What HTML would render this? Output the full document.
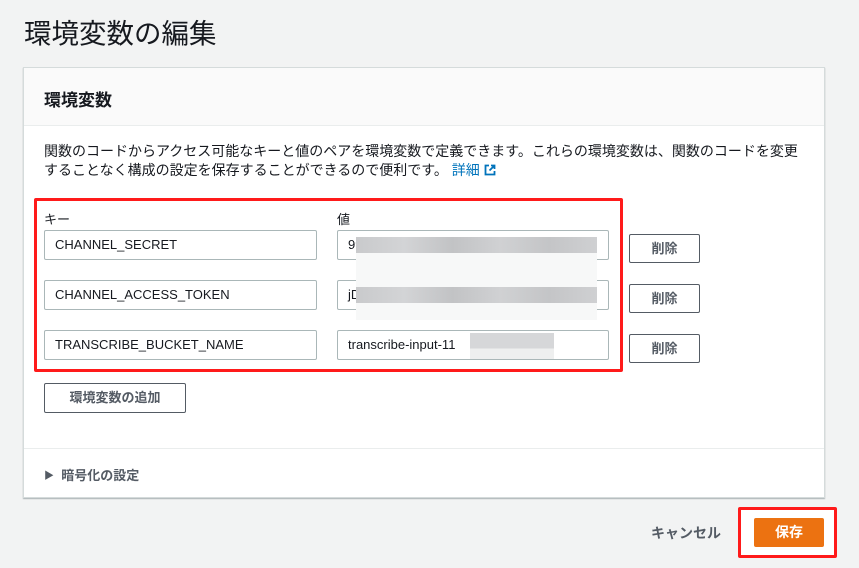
<!DOCTYPE html>
<html><head><meta charset="utf-8"><style>
*{box-sizing:border-box;margin:0;padding:0}
body{width:859px;height:568px;background:#f2f3f3;font-family:"Liberation Sans","Noto Sans CJK JP",sans-serif;color:#16191f;position:relative;overflow:hidden}
.a{position:absolute}
h1{position:absolute;left:24px;top:11px;font-size:27.5px;font-weight:400;color:#16191f}
.panel{left:23px;top:67px;width:802px;height:431px;background:#fff;border:1px solid #d5dbdb;box-shadow:0 1px 1px rgba(0,28,36,.3)}
.hd{left:0;top:0;width:800px;height:58px;background:#fafafa;border-bottom:1px solid #eaeded}
.inp{height:30px;border:1px solid #aab7b8;border-radius:2px;background:#fff;font-size:13px;padding:0 10px;line-height:28px}
.btn{border:1px solid #545b64;border-radius:2px;background:#fff;font-size:13px;font-weight:bold;color:#545b64;text-align:center}
.blur{background:linear-gradient(90deg,#c9cacc,#d3d4d6 20%,#c2c3c5 40%,#d0d1d3 60%,#c4c5c7 80%,#cfd0d2)}
</style></head><body>
<h1>環境変数の編集</h1>
<div class="a panel">
<div class="a hd"><div class="a" style="left:20px;top:18px;font-size:17px;font-weight:bold">環境変数</div></div>
<div class="a" style="left:20px;top:74px;width:780px;font-size:14px;line-height:19px;color:#16191f;white-space:nowrap">関数のコードからアクセス可能なキーと値のペアを環境変数で定義できます。これらの環境変数は、関数のコードを変更<br>することなく構成の設定を保存することができるので便利です。 <span style="color:#0073bb">詳細 <svg width="12" height="12" viewBox="0 0 12 12" style="vertical-align:-1px"><path d="M5 1.5H1.5v9h9V7M7 1.5h3.5V5M10.5 1.5 5.5 6.5" fill="none" stroke="#0073bb" stroke-width="1.8"/></svg></span></div>
<div class="a" style="left:20px;top:141px;font-size:13px">キー</div>
<div class="a" style="left:313px;top:141px;font-size:13px">値</div>
<div class="a" style="left:0;top:380px;width:800px;border-top:1px solid #eaeded"></div>
<div class="a" style="left:20px;top:397px;font-size:13px;font-weight:bold;color:#545b64"><span style="font-size:10px;vertical-align:1px">▶</span>&nbsp;&nbsp;暗号化の設定</div>
</div>
<div class="a inp" style="left:44px;top:230px;width:273px">CHANNEL_SECRET</div>
<div class="a inp" style="left:44px;top:280px;width:273px">CHANNEL_ACCESS_TOKEN</div>
<div class="a inp" style="left:44px;top:330px;width:273px">TRANSCRIBE_BUCKET_NAME</div>
<div class="a inp" style="left:337px;top:230px;width:272px">99</div>
<div class="a inp" style="left:337px;top:280px;width:272px">jD</div>
<div class="a inp" style="left:337px;top:330px;width:272px">transcribe-input-11</div>
<div class="a" style="left:356px;top:253px;width:241px;height:67px;background:#f7f8f8"></div>
<div class="a blur" style="left:356px;top:237px;width:241px;height:16px"></div>
<div class="a blur" style="left:356px;top:287px;width:241px;height:16px"></div>
<div class="a" style="left:470px;top:333px;width:84px;height:26px;background:linear-gradient(#d6d7d9 60%,#eeefef 60%)"></div>
<div class="a" style="left:34px;top:198px;width:589px;height:174px;border:3px solid #ff1a1a;border-radius:2px"></div>
<div class="a btn" style="left:629px;top:234px;width:71px;height:29px;line-height:27px">削除</div>
<div class="a btn" style="left:629px;top:284px;width:71px;height:29px;line-height:27px">削除</div>
<div class="a btn" style="left:629px;top:334px;width:71px;height:29px;line-height:27px">削除</div>
<div class="a btn" style="left:44px;top:383px;width:142px;height:30px;line-height:28px">環境変数の追加</div>
<div class="a" style="left:651px;top:523px;font-size:14px;font-weight:bold;color:#545b64">キャンセル</div>
<div class="a" style="left:738px;top:507px;width:99px;height:51px;border:3px solid #ff1a1a;border-radius:2px;background:#fff"></div>
<div class="a" style="left:754px;top:518px;width:70px;height:29px;background:#ec7211;border-radius:2px;color:#fff;font-size:14px;font-weight:bold;text-align:center;line-height:29px">保存</div>
</body></html>
